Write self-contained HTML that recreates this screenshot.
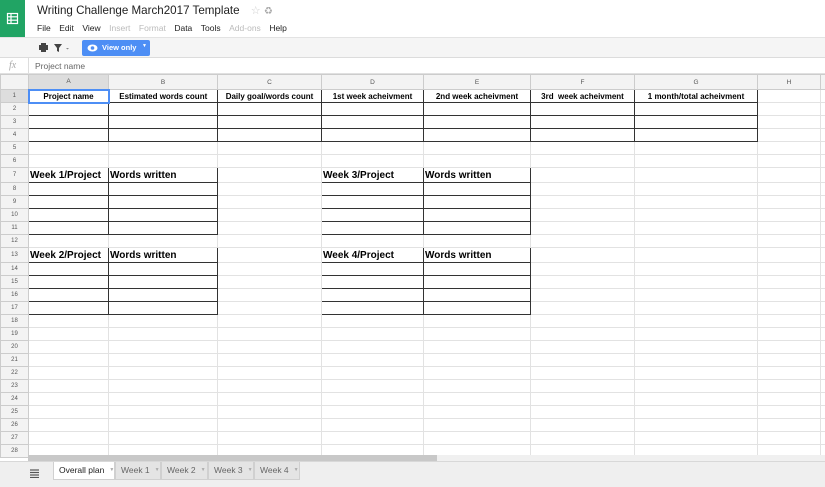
<!DOCTYPE html>
<html><head><meta charset="utf-8"><style>
*{margin:0;padding:0;box-sizing:border-box}
body{width:825px;height:487px;overflow:hidden;background:#fff;font-family:"Liberation Sans",Arial,sans-serif;position:relative}
.abs{position:absolute}
#logo{left:0;top:0;width:25px;height:37px;background:#21a464}
#title{left:37px;top:4px;font-size:11.6px;color:#222;white-space:nowrap}
#menu{left:37px;top:23px;font-size:8.5px;color:#222;white-space:nowrap}
#menu span{margin-right:8.5px}
#menu .g{color:#bbb}
#tb{left:0;top:37px;width:825px;height:21px;background:#f5f5f5;border-top:1px solid #e3e3e3;border-bottom:1px solid #dcdcdc}
#vo{left:82px;top:40px;width:68px;height:16px;background:#4d8ef5;border-radius:2px;color:#fff;font-size:7.5px;font-weight:bold}
#fx{left:0;top:58px;width:825px;height:16px;border-bottom:1px solid #e0e0e0;font-size:8.5px;color:#666}
table{position:absolute;left:0;top:74px;width:830px;border-collapse:collapse;table-layout:fixed;font-size:8px}
td{border:1px solid #e2e2e2;height:13px;padding:0 2px;white-space:nowrap;overflow:hidden}
tr.h td{height:15px;background:#f3f3f3;color:#555;font-size:6.5px;text-align:center;border-color:#ccc}
td.r{background:#f3f3f3;color:#555;font-size:6px;text-align:center;border-color:#ccc}
td.b{border:1px solid #333}
tr.t1 td.b{font-weight:bold;text-align:center}
tr.big td{height:15px}
tr.big td.b{font-weight:bold;font-size:10px;padding-left:1px}
#sb{left:28px;top:455px;width:797px;height:6px;background:#f0f0f0}
#th{left:28px;top:455px;width:409px;height:6px;background:#c8c8c8}
#tabs{left:0;top:461px;width:825px;height:26px;background:#efefef;border-top:1px solid #d8d8d8}
.tab{position:absolute;top:462px;height:18px;background:#e4e4e4;border:1px solid #d0d0d0;border-top:none;font-size:8.5px;color:#666;padding:3px 0 0 5px;white-space:nowrap}
.tab i{font-style:normal;font-size:5px;color:#aaa;margin-left:5px;vertical-align:2px}
</style></head><body>
<div id="logo" class="abs"><svg width="25" height="37"><g fill="none" stroke="#fff" stroke-width="1.2"><rect x="7.5" y="13.5" width="10" height="10"/><line x1="7.5" y1="16.8" x2="17.5" y2="16.8"/><line x1="7.5" y1="20.2" x2="17.5" y2="20.2"/><line x1="11" y1="13.5" x2="11" y2="23.5"/></g></svg></div>
<div id="title" class="abs">Writing Challenge March2017 Template <span style="color:#ccc;font-size:11px;margin-left:8px">☆</span> <span style="color:#aaa;font-size:10px">♻</span></div>
<div id="menu" class="abs"><span>File</span><span>Edit</span><span>View</span><span class="g">Insert</span><span class="g">Format</span><span>Data</span><span>Tools</span><span class="g">Add-ons</span><span>Help</span></div>
<div id="tb" class="abs"></div>
<svg class="abs" style="left:38px;top:42px" width="40" height="12"><rect x="1" y="3" width="9" height="5" fill="#444"/><rect x="3" y="1" width="5" height="2" fill="#444"/><rect x="3" y="7" width="5" height="3" fill="#444"/><path d="M16 2h8l-3 4v4l-2-1v-3z" fill="#444"/><path d="M28 6l1.5 1.5 1.5-1.5z" fill="#888"/></svg>
<div id="vo" class="abs"><svg class="abs" style="left:5px;top:4px" width="11" height="8"><ellipse cx="5.5" cy="4" rx="5" ry="3.5" fill="#fff"/><circle cx="5.5" cy="4" r="1.8" fill="#4d8ef5"/></svg><span class="abs" style="left:20px;top:3px">View only</span><span class="abs" style="left:60px;top:3px;font-size:5px">▼</span></div>
<div id="fx" class="abs"><span class="abs" style="left:9px;top:2px;font-style:italic;font-family:'Liberation Serif',serif;color:#aaa;font-size:10px">fx</span><span class="abs" style="left:28px;top:0;height:15px;border-left:1px solid #ddd"></span><span class="abs" style="left:35px;top:3px">Project name</span></div>
<table>
<colgroup><col style="width:28px"><col style="width:80px"><col style="width:109px"><col style="width:104px"><col style="width:102px"><col style="width:107px"><col style="width:104px"><col style="width:123px"><col style="width:63px"><col style="width:10px"></colgroup>
<tr class="h"><td></td><td style="background:#ddd">A</td><td>B</td><td>C</td><td>D</td><td>E</td><td>F</td><td>G</td><td>H</td><td></td></tr>
<tr class="t1"><td class="r" style="background:#ddd">1</td><td class="b" style="border:2px solid #4d8ef5">Project name</td><td class="b">Estimated words count</td><td class="b">Daily goal/words count</td><td class="b">1st week acheivment</td><td class="b">2nd week acheivment</td><td class="b">3rd&nbsp; week acheivment</td><td class="b">1 month/total acheivment</td><td></td><td></td></tr>
<tr><td class="r">2</td><td class="b"></td><td class="b"></td><td class="b"></td><td class="b"></td><td class="b"></td><td class="b"></td><td class="b"></td><td></td><td></td></tr>
<tr><td class="r">3</td><td class="b"></td><td class="b"></td><td class="b"></td><td class="b"></td><td class="b"></td><td class="b"></td><td class="b"></td><td></td><td></td></tr>
<tr><td class="r">4</td><td class="b"></td><td class="b"></td><td class="b"></td><td class="b"></td><td class="b"></td><td class="b"></td><td class="b"></td><td></td><td></td></tr>
<tr><td class="r">5</td><td></td><td></td><td></td><td></td><td></td><td></td><td></td><td></td><td></td></tr>
<tr><td class="r">6</td><td></td><td></td><td></td><td></td><td></td><td></td><td></td><td></td><td></td></tr>
<tr class="big"><td class="r">7</td><td class="b">Week 1/Project</td><td class="b">Words written</td><td></td><td class="b">Week 3/Project</td><td class="b">Words written</td><td></td><td></td><td></td><td></td></tr>
<tr><td class="r">8</td><td class="b"></td><td class="b"></td><td></td><td class="b"></td><td class="b"></td><td></td><td></td><td></td><td></td></tr>
<tr><td class="r">9</td><td class="b"></td><td class="b"></td><td></td><td class="b"></td><td class="b"></td><td></td><td></td><td></td><td></td></tr>
<tr><td class="r">10</td><td class="b"></td><td class="b"></td><td></td><td class="b"></td><td class="b"></td><td></td><td></td><td></td><td></td></tr>
<tr><td class="r">11</td><td class="b"></td><td class="b"></td><td></td><td class="b"></td><td class="b"></td><td></td><td></td><td></td><td></td></tr>
<tr><td class="r">12</td><td></td><td></td><td></td><td></td><td></td><td></td><td></td><td></td><td></td></tr>
<tr class="big"><td class="r">13</td><td class="b">Week 2/Project</td><td class="b">Words written</td><td></td><td class="b">Week 4/Project</td><td class="b">Words written</td><td></td><td></td><td></td><td></td></tr>
<tr><td class="r">14</td><td class="b"></td><td class="b"></td><td></td><td class="b"></td><td class="b"></td><td></td><td></td><td></td><td></td></tr>
<tr><td class="r">15</td><td class="b"></td><td class="b"></td><td></td><td class="b"></td><td class="b"></td><td></td><td></td><td></td><td></td></tr>
<tr><td class="r">16</td><td class="b"></td><td class="b"></td><td></td><td class="b"></td><td class="b"></td><td></td><td></td><td></td><td></td></tr>
<tr><td class="r">17</td><td class="b"></td><td class="b"></td><td></td><td class="b"></td><td class="b"></td><td></td><td></td><td></td><td></td></tr>
<tr><td class="r">18</td><td></td><td></td><td></td><td></td><td></td><td></td><td></td><td></td><td></td></tr>
<tr><td class="r">19</td><td></td><td></td><td></td><td></td><td></td><td></td><td></td><td></td><td></td></tr>
<tr><td class="r">20</td><td></td><td></td><td></td><td></td><td></td><td></td><td></td><td></td><td></td></tr>
<tr><td class="r">21</td><td></td><td></td><td></td><td></td><td></td><td></td><td></td><td></td><td></td></tr>
<tr><td class="r">22</td><td></td><td></td><td></td><td></td><td></td><td></td><td></td><td></td><td></td></tr>
<tr><td class="r">23</td><td></td><td></td><td></td><td></td><td></td><td></td><td></td><td></td><td></td></tr>
<tr><td class="r">24</td><td></td><td></td><td></td><td></td><td></td><td></td><td></td><td></td><td></td></tr>
<tr><td class="r">25</td><td></td><td></td><td></td><td></td><td></td><td></td><td></td><td></td><td></td></tr>
<tr><td class="r">26</td><td></td><td></td><td></td><td></td><td></td><td></td><td></td><td></td><td></td></tr>
<tr><td class="r">27</td><td></td><td></td><td></td><td></td><td></td><td></td><td></td><td></td><td></td></tr>
<tr><td class="r">28</td><td></td><td></td><td></td><td></td><td></td><td></td><td></td><td></td><td></td></tr>
</table>
<div id="sb" class="abs"></div><div id="th" class="abs"></div>
<div id="tabs" class="abs"></div>
<svg class="abs" style="left:30px;top:469px" width="9" height="9"><g stroke="#555" stroke-width="1.2"><line x1="0" y1="1" x2="9" y2="1"/><line x1="0" y1="3.5" x2="9" y2="3.5"/><line x1="0" y1="6" x2="9" y2="6"/><line x1="0" y1="8.5" x2="9" y2="8.5"/></g></svg>
<div class="tab" style="left:53px;width:62px;background:#fff;color:#222">Overall plan<i>▼</i></div>
<div class="tab" style="left:115px;width:46px">Week 1<i>▼</i></div>
<div class="tab" style="left:161px;width:47px">Week 2<i>▼</i></div>
<div class="tab" style="left:208px;width:46px">Week 3<i>▼</i></div>
<div class="tab" style="left:254px;width:46px">Week 4<i>▼</i></div>
</body></html>
